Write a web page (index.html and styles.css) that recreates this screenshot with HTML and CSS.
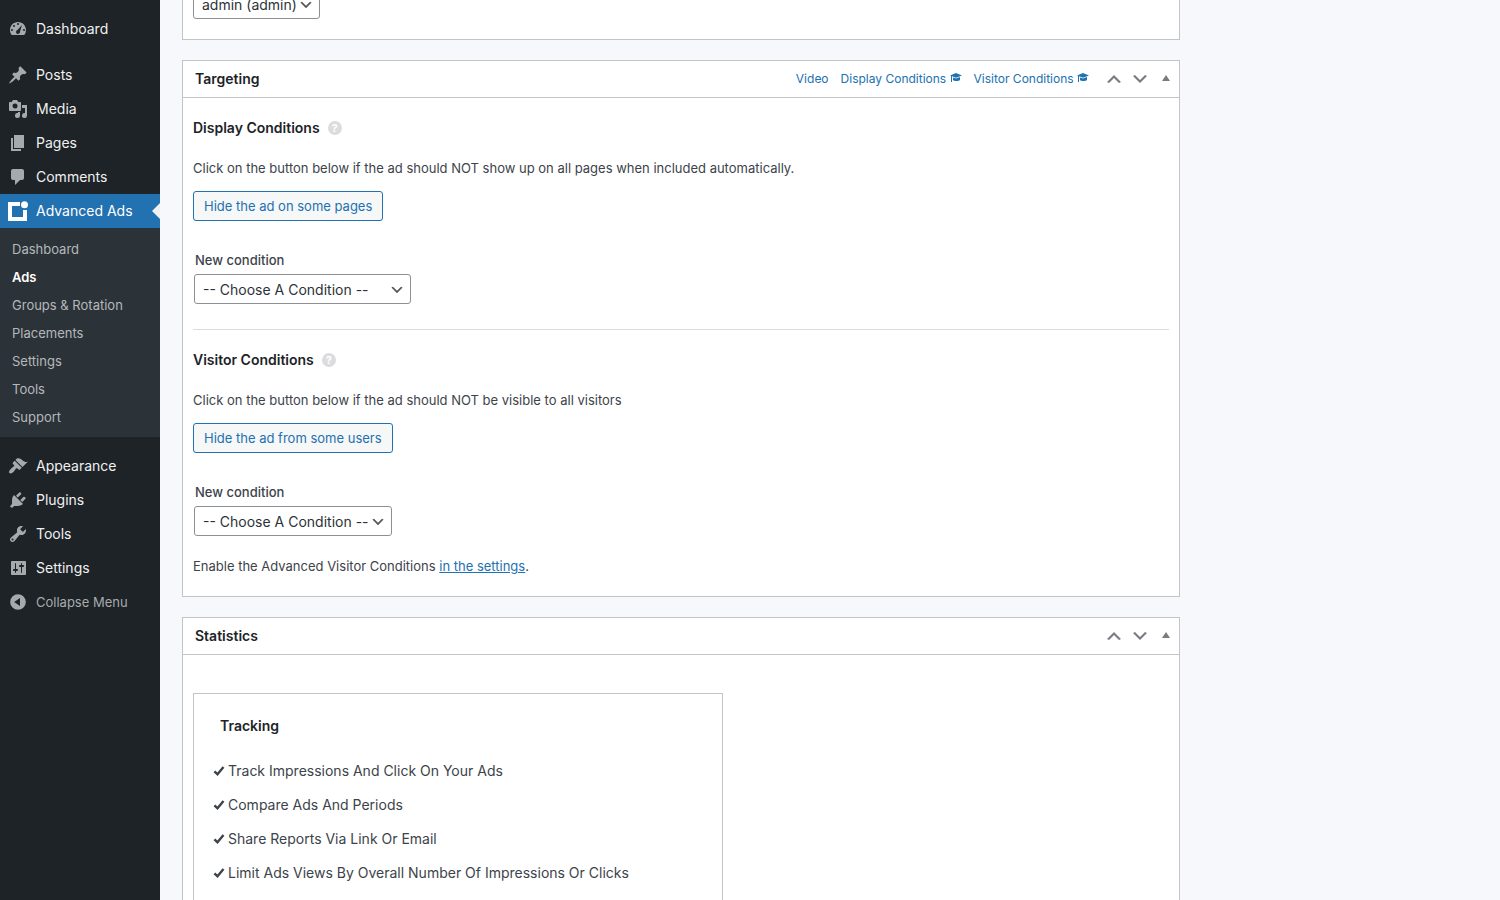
FILE: index.html
```html
<!DOCTYPE html>
<html lang="en">
<head>
  <meta charset="UTF-8" />
  <meta name="viewport" content="width=device-width, initial-scale=1.0"/>
  <title>Edit Ad</title>
  <link rel="stylesheet" href="styles.css">
</head>
<body>
  <svg class="sprite" aria-hidden="true">
    <symbol id="arrow-up" viewBox="0 0 20 20"><path d="M15 14l-5-5-5 5-2-1 7-7 7 7z"/></symbol>
    <symbol id="arrow-down" viewBox="0 0 20 20"><path d="M5 6l5 5 5-5 2 1-7 7-7-7z"/></symbol>
    <symbol id="triangle" viewBox="0 0 20 20"><path d="M6 12l4-6 4 6z"/></symbol>
    <symbol id="hat" viewBox="0 0 12 12"><path d="M6 1L12 3.400 6 5.800 2 4.300V10H1V3.800L0 3.400zM3 5.400L6 6.600l4-1.600v3C8.800 9.300 4.500 9.500 3 8.300z"/></symbol>
    <symbol id="check" viewBox="0 0 12 12"><path d="M1.400 6.300L4.500 9.200 10.500 2" fill="none" stroke="currentColor" stroke-width="2.400"/></symbol>
  </svg>

  <div class="layout">
    <nav class="sidebar">
      <ul class="menu">
        <li class="menu-first"><a class="menu-item" href="#">
          <svg class="icon" viewBox="0 0 20 20"><path fill-rule="evenodd" d="M3.760 16h12.480A7.900 7.900 0 0 0 18 11c0-4.420-3.580-8-8-8s-8 3.580-8 8c0 1.890.67 3.630 1.760 5zM10 4a1 1 0 1 1 0 2 1 1 0 0 1 0-2zM6 6a1 1 0 1 1 0 2 1 1 0 0 1 0-2zM14 6L12 12.500a2 2 0 1 1-2.500-1.500zM4 10a1 1 0 1 1 0 2 1 1 0 0 1 0-2zM16 10a1 1 0 1 1 0 2 1 1 0 0 1 0-2z"/></svg>
          Dashboard</a></li>
        <li><a class="menu-item" href="#">
          <svg class="icon" viewBox="0 0 20 20"><path d="M10.440 3.020l1.820-1.820 6.360 6.350-1.830 1.820c-1.050-.68-2.480-.57-3.410.36l-.75.75c-.92.93-1.040 2.350-.35 3.410l-1.830 1.820-2.410-2.410-2.800 2.790c-.42.42-3.380 2.710-3.800 2.290s1.860-3.390 2.280-3.810l2.790-2.790L4.100 9.360l1.830-1.820c1.050.69 2.480.57 3.400-.36l.75-.75c.93-.92 1.050-2.350.36-3.410z"/></svg>
          Posts</a></li>
        <li><a class="menu-item" href="#">
          <svg class="icon" viewBox="0 0 20 20"><path fill-rule="evenodd" d="M13 11V4c0-.55-.45-1-1-1h-1.670L9 1H5L3.670 3H2c-.55 0-1 .45-1 1v7c0 .55.45 1 1 1h10c.55 0 1-.45 1-1zM7 4.500a2.500 2.500 0 1 1 0 5 2.500 2.500 0 0 1 0-5zM14 6h5v10.500a2.500 2.500 0 1 1-2-2.450V9h-3V6zm-4 8.050V13h2v3.500a2.500 2.500 0 1 1-2-2.450z"/></svg>
          Media</a></li>
        <li><a class="menu-item" href="#">
          <svg class="icon" viewBox="0 0 20 20"><path d="M6 15V2h10v13H6zm-1 1h8v2H3V5h2v11z"/></svg>
          Pages</a></li>
        <li><a class="menu-item" href="#">
          <svg class="icon" viewBox="0 0 20 20"><path d="M5 2h9c1.100 0 2 .9 2 2v7c0 1.100-.9 2-2 2h-2l-5 5v-5H5c-1.100 0-2-.9-2-2V4c0-1.100.9-2 2-2z"/></svg>
          Comments</a></li>
        <li>
          <a class="menu-item current" href="#">
            <svg class="icon" viewBox="0 0 20 20"><path d="M0 1h12v4H4v11h11V9h4v11H0z"/><circle cx="16.500" cy="3.700" r="3.500"/></svg>
            Advanced Ads</a>
          <ul class="submenu">
            <li><a href="#">Dashboard</a></li>
            <li><a class="active" href="#">Ads</a></li>
            <li><a href="#">Groups &amp; Rotation</a></li>
            <li><a href="#">Placements</a></li>
            <li><a href="#">Settings</a></li>
            <li><a href="#">Tools</a></li>
            <li><a href="#">Support</a></li>
          </ul>
        </li>
        <li><a class="menu-item" href="#">
          <svg class="icon" viewBox="0 0 20 20"><path d="M14.480 11.060L7.410 3.990l1.500-1.500c.5-.56 2.300-.47 3.510.32 1.210.8 1.430 1.280 2.910 2.100 1.180.64 2.450 1.260 4.450.85zm-.71.71L6.700 4.700 4.930 6.470c-.39.39-.39 1.020 0 1.410l1.060 1.060c.39.39.39 1.030 0 1.420-.6.6-1.430 1.110-2.210 1.690-.35.26-.7.53-1.010.84C1.430 14.230.4 16.080 1.400 17.070c.99 1 2.840-.03 4.180-1.360.31-.31.58-.66.85-1.020.57-.78 1.080-1.610 1.690-2.210.39-.39 1.020-.39 1.410 0l1.060 1.060c.39.39 1.020.39 1.410 0z"/></svg>
          Appearance</a></li>
        <li><a class="menu-item" href="#">
          <svg class="icon" viewBox="0 0 20 20"><path d="M13.110 4.360L9.870 7.600 8 5.730l3.240-3.240c.35-.34 1.050-.2 1.560.32.52.51.66 1.210.31 1.550zm-8 1.770l.91-1.120 9.010 9.010-1.190.84c-.71.71-2.630 1.160-3.820 1.160H6.140L4.900 17.260c-.59.59-1.540.59-2.120 0-.59-.58-.59-1.530 0-2.120l1.240-1.240v-3.880c0-1.130.4-3.190 1.090-3.890zm7.260 3.970l3.240-3.240c.34-.35 1.040-.21 1.550.31.52.51.66 1.210.31 1.550l-3.240 3.250z"/></svg>
          Plugins</a></li>
        <li><a class="menu-item" href="#">
          <svg class="icon" viewBox="0 0 20 20"><path fill-rule="evenodd" d="M16.680 9.770c-1.340 1.340-3.300 1.670-4.950.99l-5.410 6.520c-.99.99-2.590.99-3.580 0s-.99-2.590 0-3.570l6.520-5.420c-.68-1.650-.35-3.610.99-4.950 1.280-1.280 3.120-1.620 4.720-1.060l-2.890 2.890 2.820 2.820 2.860-2.870c.53 1.580.18 3.390-1.080 4.650zM3.810 16.210c.4.39 1.040.39 1.430 0 .4-.4.4-1.040 0-1.430-.39-.4-1.030-.4-1.430 0-.39.39-.39 1.030 0 1.430z"/></svg>
          Tools</a></li>
        <li><a class="menu-item" href="#">
          <svg class="icon" viewBox="0 0 20 20"><path fill-rule="evenodd" d="M18 16V4c0-.55-.45-1-1-1H4c-.55 0-1 .45-1 1v12c0 .55.45 1 1 1h13c.55 0 1-.45 1-1zM8 11h1c.55 0 1 .45 1 1s-.45 1-1 1H8v1.500c0 .28-.22.5-.5.5s-.5-.22-.5-.5V13H6c-.55 0-1-.45-1-1s.45-1 1-1h1V5.500c0-.28.22-.5.5-.5s.5.22.5.5V11zm5-2h-1c-.55 0-1-.45-1-1s.45-1 1-1h1V5.500c0-.28.22-.5.5-.5s.5.22.5.5V7h1c.55 0 1 .45 1 1s-.45 1-1 1h-1v5.500c0 .28-.22.5-.5.5s-.5-.22-.5-.5V9z"/></svg>
          Settings</a></li>
        <li><button class="menu-item collapse" type="button">
          <svg class="icon" viewBox="0 0 20 20"><path fill-rule="evenodd" d="M10 2.160a7.840 7.840 0 1 1 0 15.680 7.840 7.840 0 0 1 0-15.680zm2 11.720V6.120L6.180 9.970z"/></svg>
          Collapse Menu</button></li>
      </ul>
    </nav>

    <main class="content">
      <section class="panel author">
        <div class="panel-body">
          <select aria-label="Author">
            <option>admin (admin)</option>
          </select>
        </div>
      </section>

      <section class="panel">
        <header class="panel-header">
          <h2>Targeting</h2>
          <div class="panel-links">
            <a href="#">Video</a>
            <a href="#">Display Conditions <svg class="hat"><use href="#hat"/></svg></a>
            <a href="#">Visitor Conditions <svg class="hat"><use href="#hat"/></svg></a>
          </div>
          <div class="handles">
            <button type="button" aria-label="Move up"><svg><use href="#arrow-up"/></svg></button>
            <button type="button" aria-label="Move down"><svg><use href="#arrow-down"/></svg></button>
            <button type="button" aria-label="Toggle panel"><svg><use href="#triangle"/></svg></button>
          </div>
        </header>
        <div class="panel-body">
          <h3>Display Conditions <span class="help">?</span></h3>
          <p>Click on the button below if the ad should NOT show up on all pages when included automatically.</p>
          <button class="button" type="button">Hide the ad on some pages</button>
          <div class="field">
            <label for="display-condition">New condition</label>
            <select id="display-condition" class="wide">
              <option>-- Choose A Condition --</option>
            </select>
          </div>
          <hr>
          <h3>Visitor Conditions <span class="help">?</span></h3>
          <p>Click on the button below if the ad should NOT be visible to all visitors</p>
          <button class="button" type="button">Hide the ad from some users</button>
          <div class="field">
            <label for="visitor-condition">New condition</label>
            <select id="visitor-condition">
              <option>-- Choose A Condition --</option>
            </select>
          </div>
          <p class="note">Enable the Advanced Visitor Conditions <a href="#">in the settings</a>.</p>
        </div>
      </section>

      <section class="panel">
        <header class="panel-header">
          <h2>Statistics</h2>
          <div class="handles">
            <button type="button" aria-label="Move up"><svg><use href="#arrow-up"/></svg></button>
            <button type="button" aria-label="Move down"><svg><use href="#arrow-down"/></svg></button>
            <button type="button" aria-label="Toggle panel"><svg><use href="#triangle"/></svg></button>
          </div>
        </header>
        <div class="panel-body statistics">
          <div class="tracking">
            <h3>Tracking</h3>
            <ul>
              <li><svg class="check"><use href="#check"/></svg>Track Impressions And Click On Your Ads</li>
              <li><svg class="check"><use href="#check"/></svg>Compare Ads And Periods</li>
              <li><svg class="check"><use href="#check"/></svg>Share Reports Via Link Or Email</li>
              <li><svg class="check"><use href="#check"/></svg>Limit Ads Views By Overall Number Of Impressions Or Clicks</li>
            </ul>
          </div>
        </div>
      </section>
    </main>
  </div>
</body>
</html>
```
FILE: styles.css
```css
* {
  box-sizing: border-box;
}
body {
  margin: 0;
  font-family: Inter, "Liberation Sans", sans-serif;
  font-size: 13px;
  line-height: 20px;
  color: #3c434a;
  background: #f7f8fb;
}
ul {
  list-style: none;
  margin: 0;
  padding: 0;
}
h2, h3, p {
  margin: 0;
}
a {
  color: #2271b1;
}
button, select {
  font-family: inherit;
}
.sprite {
  display: none;
}
.layout {
  display: grid;
  grid-template-columns: 160px 1fr;
  height: 100vh;
  overflow: hidden;
}

/* sidebar */
.sidebar {
  background: #1d2327;
  padding-top: 12px;
}
.menu-first {
  margin-bottom: 12px;
}
.menu-item {
  position: relative;
  display: flex;
  align-items: center;
  gap: 8px;
  width: 100%;
  height: 34px;
  padding: 0 8px;
  font-size: 14px;
  color: #f0f0f1;
  text-decoration: none;
}
.icon {
  width: 20px;
  height: 20px;
  fill: #a7aaad;
}
.menu-item.current {
  background: #2271b1;
  color: #fff;
}
.current .icon {
  fill: #fff;
}
.current::after {
  content: "";
  position: absolute;
  right: 0;
  top: 9px;
  border: 8px solid transparent;
  border-left-width: 0;
  border-right-color: #f0f0f1;
}
.menu-item.collapse {
  border: 0;
  background: none;
  font-size: 13px;
  color: #a7aaad;
  cursor: pointer;
}
.submenu {
  background: #2c3338;
  padding: 7px 0 6px;
  margin-bottom: 12px;
}
.submenu a {
  display: block;
  padding: 4px 12px;
  color: #b4b8bc;
  text-decoration: none;
}
.submenu a.active {
  color: #fff;
  font-weight: 600;
}

/* panels */
.content {
  padding: 0 320px 0 22px;
}
.panel {
  background: #fff;
  border: 1px solid #c3c4c7;
  margin-bottom: 20px;
}
.author {
  margin-top: -32px;
}
.panel-header {
  display: flex;
  align-items: center;
  height: 37px;
  border-bottom: 1px solid #c3c4c7;
}
.panel-header h2 {
  flex: 1;
  padding-left: 12px;
}
h2, h3 {
  font-size: 14px;
  font-weight: 600;
  line-height: 20px;
  color: #1d2327;
}
.panel-links {
  display: flex;
  gap: 12px;
  padding-right: 12px;
  font-size: 12px;
}
.panel-links a {
  text-decoration: none;
}
.hat {
  width: 12px;
  height: 12px;
  fill: #2271b1;
  vertical-align: -1px;
}
.handles {
  display: flex;
}
.handles button {
  display: flex;
  align-items: center;
  justify-content: center;
  width: 26px;
  height: 36px;
  padding: 0;
  border: 0;
  background: none;
  cursor: pointer;
}
.handles svg {
  width: 20px;
  height: 20px;
  fill: #787c82;
}
.panel-body {
  padding: 20px 10px;
}
.panel-body h3 {
  display: flex;
  align-items: center;
  gap: 8px;
  margin-bottom: 20px;
}
.help {
  width: 14px;
  height: 14px;
  border-radius: 50%;
  background: #dcdcde;
  color: #fff;
  font-size: 11px;
  font-weight: 700;
  line-height: 14px;
  text-align: center;
}
.button {
  display: block;
  height: 30px;
  margin: 13px 0 29px;
  padding: 0 10px;
  border: 1px solid #2271b1;
  border-radius: 3px;
  background: #f6f7f7;
  color: #2271b1;
  font-size: 13px;
  cursor: pointer;
}
.field {
  display: flex;
  flex-direction: column;
  align-items: flex-start;
  gap: 4px;
  padding-left: 1px;
}
.field label {
  padding-left: 1px;
  font-weight: 500;
}
select {
  display: block;
  height: 30px;
  padding: 0 22px 0 8px;
  border: 1px solid #8c8f94;
  border-radius: 3px;
  appearance: none;
  background: #fff url("data:image/svg+xml,%3Csvg xmlns='http://www.w3.org/2000/svg' viewBox='0 0 20 20'%3E%3Cpath d='M5 6l5 5 5-5 2 1-7 7-7-7z' fill='%23555'/%3E%3C/svg%3E") no-repeat right 5px top 55%;
  background-size: 16px 16px;
  color: #2c3338;
  font-size: 14px;
}
select.wide {
  width: 217px;
}
hr {
  margin: 25px 0 20px;
  border: 0;
  border-top: 1px solid #dcdcde;
}
.note {
  margin-top: 20px;
}

/* statistics */
.statistics {
  padding-top: 38px;
}
.tracking {
  max-width: 530px;
  min-height: 260px;
  padding: 22px 19px;
  border: 1px solid #c3c4c7;
}
.tracking h3 {
  padding-left: 7px;
  margin-bottom: 18px;
}
.tracking li {
  display: flex;
  align-items: center;
  gap: 3px;
  height: 34px;
  font-size: 14px;
}
.check {
  width: 12px;
  height: 12px;
}
```
